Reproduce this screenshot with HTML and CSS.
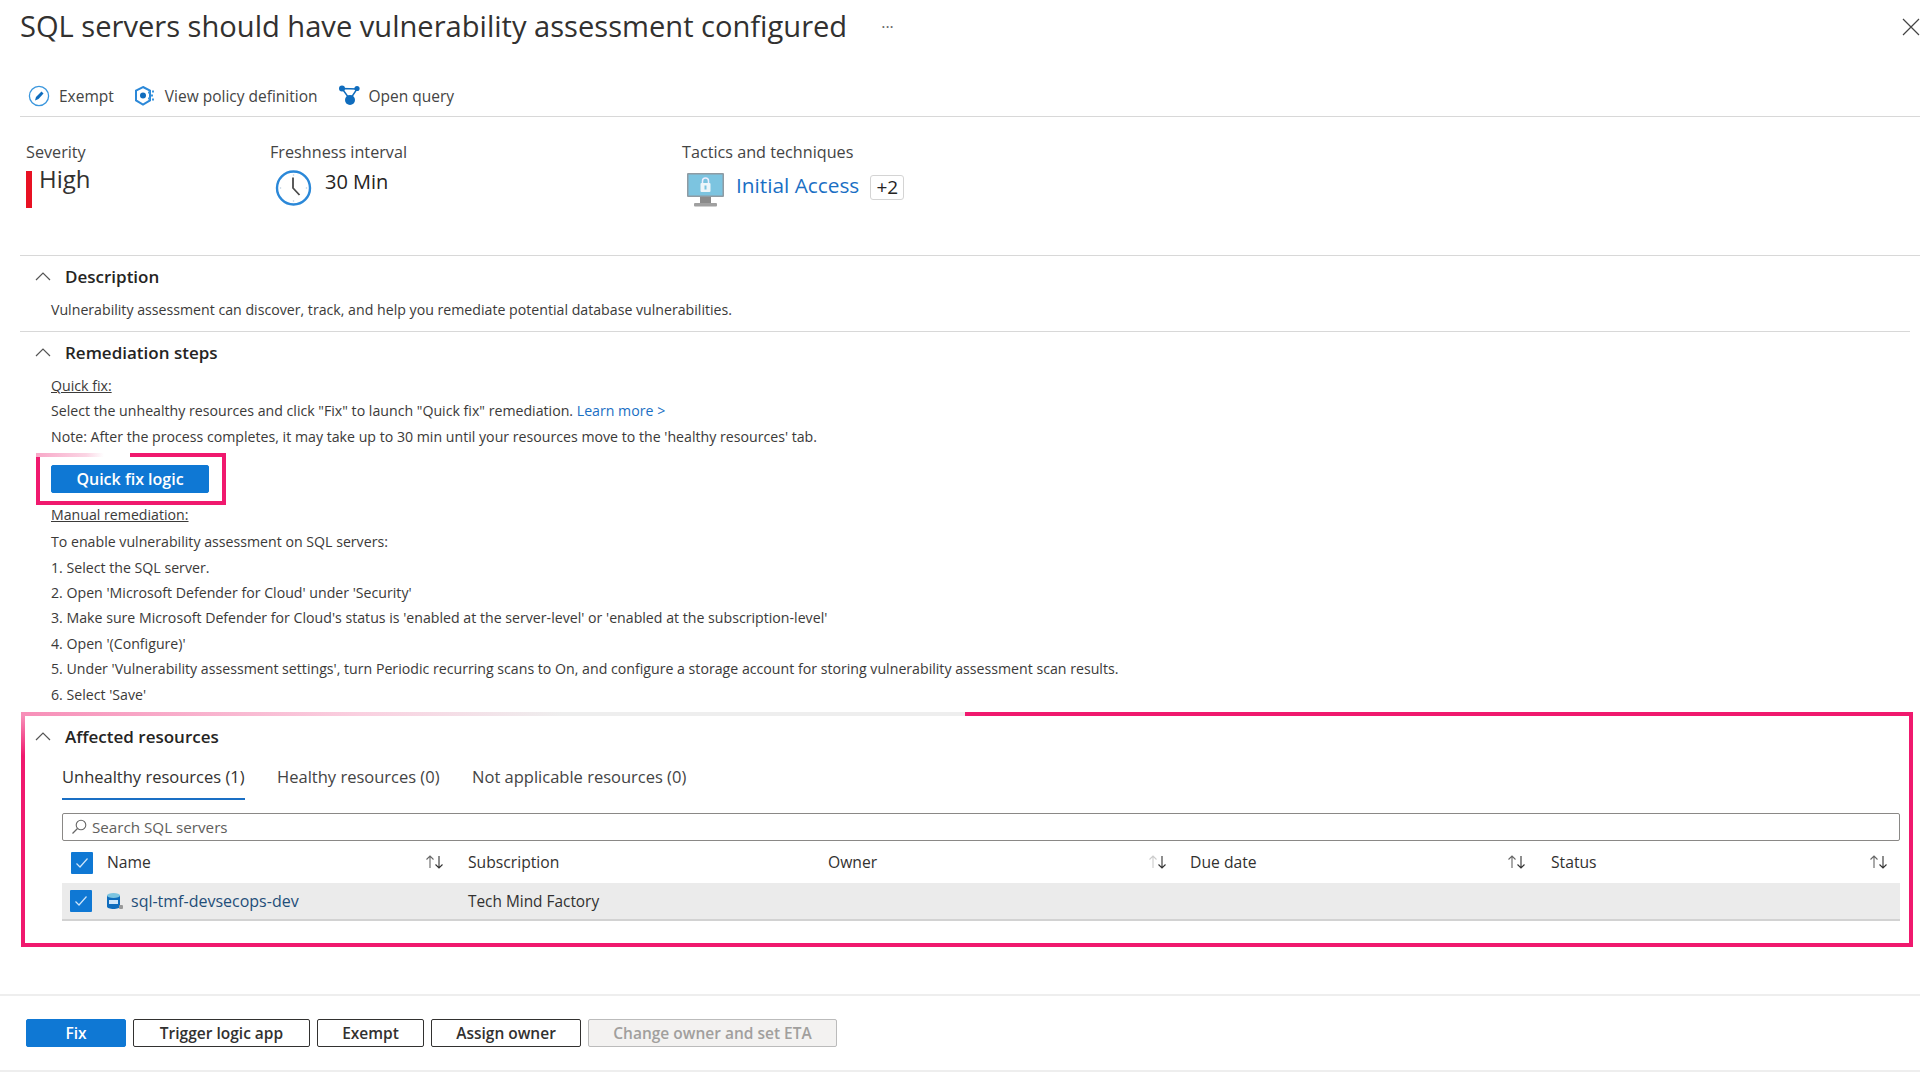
FILE: index.html
```html
<!DOCTYPE html>
<html lang="en">
<head>
  <meta charset="UTF-8" />
  <title>SQL servers should have vulnerability assessment configured</title>
  <link rel="stylesheet" href="styles.css">
</head>
<body>

<!-- Title -->
<header class="title-bar">
  <h1>SQL servers should have vulnerability assessment configured</h1>
  <span class="more">···</span>
  <svg class="close" width="18" height="18" viewBox="0 0 18 18"><path d="M1 1l16 16M17 1L1 17" stroke="#444" stroke-width="1.2" fill="none"/></svg>
</header>

<!-- Toolbar -->
<nav class="toolbar">
  <a class="tool">
    <svg width="22" height="22" viewBox="0 0 22 22"><circle cx="11" cy="11" r="9.6" fill="none" stroke="#3a96dd" stroke-width="1.3"/><path d="M7 15.500l1-3.500 5.500-5.500 2 2-5 5.500z" fill="#0f6cbd"/></svg>
    Exempt
  </a>
  <a class="tool">
    <svg width="22" height="22" viewBox="0 0 22 22"><path d="M9 2l7 3.600v9.800L9 19.500 2 15.400V5.600z" fill="none" stroke="#2b88d8" stroke-width="2"/><circle cx="9" cy="10.500" r="3" fill="#0f6cbd"/><g fill="#3a96dd"><rect x="14" y="6.500" width="2" height="2"/><rect x="17" y="9.500" width="2" height="2"/><rect x="14" y="12.500" width="2" height="2"/><rect x="18" y="5.500" width="2" height="2"/><rect x="18" y="13.500" width="2" height="2"/></g></svg>
    View policy definition
  </a>
  <a class="tool">
    <svg width="22" height="22" viewBox="0 0 22 22"><path d="M4 3.500l15 .5M4 3.500l8 11M19 4l-7 10.500" stroke="#0f6cbd" stroke-width="1.400" fill="none"/><circle cx="4" cy="3.500" r="3" fill="#0f6cbd"/><circle cx="19" cy="3.500" r="2.600" fill="#0f6cbd"/><circle cx="12" cy="15" r="5" fill="#0f6cbd"/></svg>
    Open query
  </a>
</nav>

<!-- Summary -->
<section class="summary">
  <div class="col col-severity">
    <div class="label">Severity</div>
    <div class="severity-value"><span class="sev-bar"></span><span class="sev-text">High</span></div>
  </div>
  <div class="col col-fresh">
    <div class="label">Freshness interval</div>
    <div class="fresh-value">
      <svg width="37" height="36" viewBox="0 0 37 36"><circle cx="18.500" cy="18" r="16.500" fill="#fff" stroke="#2b88d8" stroke-width="2.400"/><path d="M18 7.500V18l6.500 7" fill="none" stroke="#4a4a4a" stroke-width="1.800"/><g fill="#bcd"><circle cx="18.500" cy="5" r=".8"/><circle cx="18.500" cy="31" r=".8"/><circle cx="5.500" cy="18" r=".8"/><circle cx="31.500" cy="18" r=".8"/></g></svg>
      <span>30 Min</span>
    </div>
  </div>
  <div class="col col-tactics">
    <div class="label">Tactics and techniques</div>
    <div class="tactics-value">
      <svg width="37" height="35" viewBox="0 0 37 35"><rect x="0" y="0" width="37" height="24" rx="1" fill="#8f9ba3"/><rect x="1.500" y="1.500" width="34" height="21" fill="#7cc4e0"/><rect x="13" y="24" width="11" height="6" fill="#8a8a8a"/><rect x="7" y="30" width="23" height="3.500" rx="1" fill="#a0a0a0"/><path d="M15.500 10V8a3 3 0 016 0v2" fill="none" stroke="#eef" stroke-width="1.500"/><rect x="13.500" y="10" width="10" height="9" rx="1" fill="#eef6fa"/><rect x="17.500" y="12.500" width="2" height="4" fill="#7cc4e0"/></svg>
      <a class="tactic-link">Initial Access</a>
      <span class="plus-badge">+2</span>
    </div>
  </div>
</section>

<!-- Description -->
<section class="block block-desc">
  <h2 class="block-head">
    <svg class="chev" width="16" height="10" viewBox="0 0 16 10"><path d="M1 9l7-7 7 7" fill="none" stroke="#555" stroke-width="1.200"/></svg>
    Description
  </h2>
  <p class="line line-first">Vulnerability assessment can discover, track, and help you remediate potential database vulnerabilities.</p>
</section>

<!-- Remediation -->
<section class="block block-steps">
  <h2 class="block-head">
    <svg class="chev" width="16" height="10" viewBox="0 0 16 10"><path d="M1 9l7-7 7 7" fill="none" stroke="#555" stroke-width="1.200"/></svg>
    Remediation steps
  </h2>
  <p class="line line-first"><u>Quick fix:</u></p>
  <p class="line">Select the unhealthy resources and click "Fix" to launch "Quick fix" remediation. <a class="link">Learn more &gt;</a></p>
  <p class="line">Note: After the process completes, it may take up to 30 min until your resources move to the 'healthy resources' tab.</p>
  <div class="quick-box">
    <button class="btn btn-primary btn-quick">Quick fix logic</button>
  </div>
  <p class="line line-manual"><u>Manual remediation:</u></p>
  <p class="line">To enable vulnerability assessment on SQL servers:</p>
  <p class="line">1. Select the SQL server.</p>
  <p class="line">2. Open 'Microsoft Defender for Cloud' under 'Security'</p>
  <p class="line">3. Make sure Microsoft Defender for Cloud's status is 'enabled at the server-level' or 'enabled at the subscription-level'</p>
  <p class="line">4. Open '(Configure)'</p>
  <p class="line">5. Under 'Vulnerability assessment settings', turn Periodic recurring scans to On, and configure a storage account for storing vulnerability assessment scan results.</p>
  <p class="line">6. Select 'Save'</p>
</section>

<!-- Affected resources -->
<section class="affected">
  <h2 class="block-head">
    <svg class="chev" width="16" height="10" viewBox="0 0 16 10"><path d="M1 9l7-7 7 7" fill="none" stroke="#555" stroke-width="1.200"/></svg>
    Affected resources
  </h2>
  <div class="tabs">
    <a class="tab tab-active">Unhealthy resources (1)</a>
    <a class="tab">Healthy resources (0)</a>
    <a class="tab">Not applicable resources (0)</a>
  </div>
  <div class="search">
    <svg width="16" height="16" viewBox="0 0 16 16"><circle cx="10" cy="6" r="4.800" fill="none" stroke="#666" stroke-width="1.100"/><path d="M6.500 9.500L1.500 14.500" stroke="#666" stroke-width="1.200"/></svg>
    <span>Search SQL servers</span>
  </div>
  <div class="grid-row grid-head">
    <div class="cell cell-name">
      <span class="name-wrap"><span class="check"><svg width="14" height="12" viewBox="0 0 14 12"><path d="M1.500 6.500l3.500 3.500 7.500-8.500" fill="none" stroke="#cfe6fa" stroke-width="1.200"/></svg></span>Name</span>
      <svg class="sort" width="21" height="16" viewBox="0 0 21 16"><path d="M6 14V2M2.500 5.500L6 2l3.500 3.500" fill="none" stroke="#666" stroke-width="1.100"/><path d="M15 2v12M11.500 10.500L15 14l3.500-3.500" fill="none" stroke="#333" stroke-width="1.100"/></svg>
    </div>
    <div class="cell">Subscription</div>
    <div class="cell">
      Owner
      <svg class="sort" width="21" height="16" viewBox="0 0 21 16"><path d="M6 14V2M2.500 5.500L6 2l3.500 3.500" fill="none" stroke="#ccc" stroke-width="1.100"/><path d="M15 2v12M11.500 10.500L15 14l3.500-3.500" fill="none" stroke="#333" stroke-width="1.100"/></svg>
    </div>
    <div class="cell cell-due">
      Due date
      <svg class="sort" width="21" height="16" viewBox="0 0 21 16"><path d="M6 14V2M2.500 5.500L6 2l3.500 3.500" fill="none" stroke="#666" stroke-width="1.100"/><path d="M15 2v12M11.500 10.500L15 14l3.500-3.500" fill="none" stroke="#333" stroke-width="1.100"/></svg>
    </div>
    <div class="cell cell-status">
      Status
      <svg class="sort" width="21" height="16" viewBox="0 0 21 16"><path d="M6 14V2M2.500 5.500L6 2l3.500 3.500" fill="none" stroke="#666" stroke-width="1.100"/><path d="M15 2v12M11.500 10.500L15 14l3.500-3.500" fill="none" stroke="#333" stroke-width="1.100"/></svg>
    </div>
  </div>
  <div class="grid-row grid-data">
    <div class="cell cell-name">
      <span class="name-wrap name-wrap-data">
        <span class="check"><svg width="14" height="12" viewBox="0 0 14 12"><path d="M1.500 6.500l3.500 3.500 7.500-8.500" fill="none" stroke="#cfe6fa" stroke-width="1.200"/></svg></span>
        <svg class="sql-icon" width="18" height="18" viewBox="0 0 18 18"><path d="M1 3.500v11c0 1.500 3 2.500 6.500 2.500s6.500-1 6.500-2.500v-11z" fill="#0f6cbd"/><ellipse cx="7.500" cy="3.500" rx="6.500" ry="2.500" fill="#7cc4e0"/><rect x="3" y="8" width="9" height="4" fill="#cfe6fa"/><rect x="13" y="13" width="4" height="4" rx="1" fill="#999"/></svg>
        <a class="res-link">sql-tmf-devsecops-dev</a>
      </span>
    </div>
    <div class="cell">Tech Mind Factory</div>
    <div class="cell"></div>
    <div class="cell"></div>
    <div class="cell"></div>
  </div>
</section>

<!-- Footer buttons -->
<footer class="actions">
  <button class="btn btn-primary btn-fix">Fix</button>
  <button class="btn btn-trigger">Trigger logic app</button>
  <button class="btn btn-exempt">Exempt</button>
  <button class="btn btn-assign">Assign owner</button>
  <button class="btn btn-disabled">Change owner and set ETA</button>
</footer>

</body>
</html>
```

FILE: styles.css
```css
* {
  box-sizing: border-box;
}
html, body {
  margin: 0;
  padding: 0;
  height: 1080px;
  overflow: hidden;
  background: #fff;
}
body {
  font-family: "Open Sans", "Noto Sans", Arial, sans-serif;
  color: #323130;
  font-size: 14px;
}

/* title */
.title-bar {
  height: 54px;
  padding-left: 20px;
  display: flex;
  align-items: center;
}
.title-bar h1 {
  margin: 0;
  font-size: 29.100px;
  font-weight: 400;
  line-height: 52px;
  height: 54px;
}
.more {
  margin-left: 34px;
  font-size: 16px;
  color: #666;
}
.close {
  margin-left: auto;
}

/* toolbar */
.toolbar {
  height: 63px;
  margin-left: 20px;
  padding-top: 31px;
  display: flex;
  align-items: flex-start;
  gap: 12px;
  border-bottom: 1px solid #d8d8d8;
}
.tool {
  display: flex;
  align-items: center;
  gap: 9px;
  height: 22px;
  padding-left: 8px;
  font-size: 15.500px;
  color: #444;
}

/* summary */
.summary {
  display: flex;
  height: 139px;
  margin-left: 20px;
  padding-top: 25px;
  border-bottom: 1px solid #d8d8d8;
}
.col-severity { width: 250px; padding-left: 6px; }
.col-fresh { width: 412px; }
.label {
  font-size: 16.200px;
  line-height: 20px;
  color: #444;
}
.severity-value {
  display: flex;
  gap: 7px;
  margin-top: 9px;
  font-size: 24px;
  line-height: 22px;
}
.sev-bar {
  width: 6px;
  height: 37px;
  background: #e81123;
}
.sev-text { margin-top: -3px; }
.fresh-value {
  display: flex;
  gap: 13px;
  margin-top: 8px;
  padding-left: 5px;
  font-size: 20px;
  line-height: 24px;
  color: #252423;
}
.tactics-value {
  display: flex;
  align-items: flex-start;
  gap: 12px;
  margin-top: 11px;
  padding-left: 5px;
}
.tactic-link {
  color: #1a6fc4;
  font-size: 20.800px;
  line-height: 24px;
  font-weight: 500;
}
.plus-badge {
  margin-left: -1px;
  margin-top: 2px;
  width: 34px;
  height: 25px;
  border: 1px solid #d4d4d4;
  border-radius: 3px;
  text-align: center;
  font-size: 19px;
  line-height: 22px;
  color: #252423;
}

/* collapsible blocks */
.block {
  margin-left: 20px;
  margin-right: 10px;
  border-bottom: 1px solid #d8d8d8;
}
.block-desc { height: 76px; }
.block-steps { height: 380px; border-bottom: 0; }
.block-head {
  margin: 0;
  padding: 0 0 2px 15px;
  height: 42px;
  display: flex;
  align-items: center;
  gap: 14px;
  font-size: 17px;
  font-weight: 600;
  color: #252423;
}
.line {
  margin: 0;
  padding-left: 31px;
  font-size: 14.170px;
  line-height: 25.400px;
  white-space: nowrap;
  color: #3b3a39;
}
.line-first { margin-top: -1px; }
.link { color: #1a6fc4; }
.line-manual { margin-top: -3px; margin-bottom: 1.500px; }

/* quick fix highlight */
.quick-box {
  position: relative;
  width: 190px;
  height: 52px;
  margin: 4px 0 0 16px;
  padding: 8px 11px 0;
  border: 4px solid #f0196e;
  border-top-color: transparent;
}
.quick-box::before {
  content: "";
  position: absolute;
  left: -4px;
  right: -4px;
  top: -4px;
  height: 4px;
  background: linear-gradient(90deg, #f8a8c8 0, #fbd5e4 50px, #fff 68px, #fff 94px, #f0196e 94px);
}

.btn {
  height: 28px;
  border: 1px solid #323130;
  border-radius: 2px;
  background: #fff;
  color: #323130;
  font-family: inherit;
  font-size: 15.500px;
  font-weight: 600;
  padding: 0;
}
.btn-primary {
  background: #0f78d4;
  border-color: #0f78d4;
  color: #fff;
}
.btn-quick { width: 158px; display: block; font-size: 16px; }

/* affected resources */
.affected {
  position: relative;
  width: 1892px;
  height: 235px;
  margin-left: 21px;
  border: 4px solid #f0196e;
  border-top-color: transparent;
}
.affected::before {
  content: "";
  position: absolute;
  left: -4px;
  right: -4px;
  top: -4px;
  height: 4px;
  background: linear-gradient(90deg, #f78fb8 0, #fad0e0 340px, #eee 540px, #eee 944px, #f0196e 944px);
}
.affected::after {
  content: "";
  position: absolute;
  left: -4px;
  top: 0;
  width: 4px;
  height: 40px;
  background: linear-gradient(180deg, #f78fb8, #f0196e);
}
.affected .block-head {
  height: 42px;
  padding-left: 10px;
}
.tabs {
  display: flex;
  gap: 32.500px;
  margin: 4px 0 0 37px;
  height: 39px;
}
.tab {
  font-size: 16.500px;
  line-height: 30px;
  color: #444;
}
.tab-active {
  color: #323130;
  border-bottom: 2px solid #1a6fc4;
  height: 38px;
  font-weight: 500;
}
.search {
  display: flex;
  align-items: center;
  gap: 5px;
  height: 28px;
  margin: 12px 9px 0 37px;
  padding-left: 8px;
  border: 1px solid #8a8886;
  border-radius: 2px;
  color: #605e5c;
  font-size: 15.200px;
}
.grid-row {
  display: grid;
  grid-template-columns: 406px 360px 362px 361px 1fr;
  margin: 0 9px 0 37px;
  align-items: center;
}
.grid-head {
  height: 42px;
  font-size: 15.700px;
  font-weight: 500;
}
.grid-head .check { margin-top: 2px; }
.grid-data {
  height: 38px;
  background: #ebebeb;
  border-bottom: 2px solid #d2d2d2;
  font-size: 15.400px;
}
.cell {
  display: flex;
  justify-content: space-between;
  align-items: center;
  padding-right: 22px;
}
.cell-name { padding-right: 23px; }
.cell-due { padding-right: 24px; }
.cell-status { padding-right: 11px; }
.name-wrap {
  display: flex;
  align-items: center;
  gap: 14px;
  padding-left: 9px;
}
.name-wrap-data {
  padding-left: 8px;
  gap: 14px;
}
.check {
  width: 22px;
  height: 22px;
  border-radius: 1px;
  background: #0f78d4;
  display: flex;
  align-items: center;
  justify-content: center;
}
.sql-icon { margin-right: -7px; }
.res-link {
  color: #1f4e79;
  font-weight: 500;
  font-size: 16px;
}

/* footer */
.actions {
  display: flex;
  gap: 7px;
  height: 78px;
  margin-top: 47px;
  padding: 23px 0 0 26px;
  border-top: 2px solid #eee;
  border-bottom: 2px solid #eee;
}
.btn-fix { width: 100px; }
.btn-trigger { width: 177px; }
.btn-exempt { width: 107px; }
.btn-assign { width: 150px; }
.btn-disabled {
  width: 249px;
  background: #f3f2f1;
  border-color: #bbb;
  color: #a19f9d;
}
```
